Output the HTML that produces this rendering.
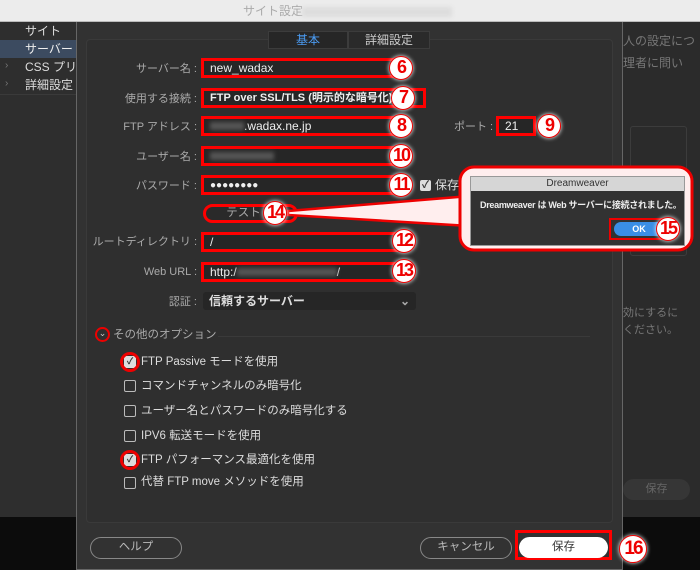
<!DOCTYPE html>
<html><head><meta charset="utf-8"><style>
*{margin:0;padding:0;box-sizing:border-box}
body{width:700px;height:570px;overflow:hidden;background:#2b2b2b;font-family:"Liberation Sans","Noto Sans CJK JP",sans-serif;position:relative;color:#ddd;font-size:11px}
.a{position:absolute}
.lbl{position:absolute;right:503px;color:#aaa;font-size:11px;white-space:nowrap;line-height:14px}
.inp{position:absolute;left:201px;width:197px;height:20px;background:#262626;border:3px solid #f00;color:#eee;font-size:12px;padding-left:6px;line-height:15px}
.num{position:absolute;width:24px;height:24px;border-radius:50%;background:#fff;border:1.5px solid #e00;color:#e00;font-weight:bold;font-size:18px;line-height:21px;text-align:center;box-shadow:0 0 4px #fff;letter-spacing:-2px;font-family:"Liberation Sans",sans-serif}
.cb{position:absolute;left:124px;width:12px;height:12px;border:1.5px solid #bbb;border-radius:2px}
.ct{position:absolute;left:141px;color:#ddd;font-size:11.5px;white-space:nowrap;line-height:14px}
.pill{position:absolute;border:1.5px solid #888;border-radius:12px;text-align:center;color:#bbb;font-size:11.5px}
</style></head><body>
<div class="a" style="left:0;top:0;width:700px;height:22px;background:#ececec;border-bottom:1px solid #bbb"></div>
<div class="a" style="left:243px;top:4px;color:#aaa;font-size:12px;line-height:14px">サイト設定</div>
<div class="a" style="left:302px;top:7px;width:150px;height:10px;background:#ddd;filter:blur(2px)"></div>
<div class="a" style="left:0;top:22px;width:76px;height:495px;background:#2e2e2e"></div>
<div class="a" style="left:0;top:517px;width:76px;height:53px;background:#0c0c0c"></div>
<div class="a" style="left:25px;top:24px;font-size:12px;color:#ddd;line-height:14px">サイト</div>
<div class="a" style="left:0;top:40px;width:76px;height:18px;background:#3c4b60"></div>
<div class="a" style="left:25px;top:42px;font-size:12px;color:#eee;line-height:14px">サーバー</div>
<div class="a" style="left:5px;top:60px;font-size:10px;color:#777">›</div>
<div class="a" style="left:25px;top:60px;font-size:12px;color:#ddd;white-space:nowrap;width:50px;overflow:hidden;line-height:14px">CSS プリプ</div>
<div class="a" style="left:5px;top:78px;font-size:10px;color:#777">›</div>
<div class="a" style="left:25px;top:78px;font-size:12px;color:#ddd;line-height:14px">詳細設定</div>
<div class="a" style="left:0;top:94px;width:76px;height:1px;background:#3a3a3a"></div>
<div class="a" style="left:623px;top:517px;width:77px;height:53px;background:#0c0c0c"></div>
<div class="a" style="left:623px;top:30px;color:#777;font-size:12px;line-height:22px;white-space:nowrap">人の設定につ<br>理者に問い</div>
<div class="a" style="left:630px;top:126px;width:57px;height:130px;border:1px solid #3c3c3c;border-radius:3px"></div>
<div class="a" style="left:623px;top:305px;color:#777;font-size:11px;line-height:17px;white-space:nowrap">効にするに<br>ください。</div>
<div class="a" style="left:623px;top:479px;width:67px;height:21px;background:#363636;border-radius:11px;color:#666;text-align:center;line-height:21px">保存</div>
<div class="a" style="left:76px;top:22px;width:547px;height:548px;background:#323232;border-left:1px solid #666;border-right:1px solid #666;border-bottom:1px solid #666"></div>
<div class="a" style="left:86px;top:39px;width:527px;height:484px;background:#2f2f2f;border:1px solid #3a3a3a;border-radius:4px"></div>
<div class="a" style="left:268px;top:31px;width:80px;height:18px;background:#262626;border:1px solid #3c3c3c;color:#4a9af0;text-align:center;line-height:16px;font-size:12px">基本</div>
<div class="a" style="left:348px;top:31px;width:82px;height:18px;background:#2a2a2a;border:1px solid #3c3c3c;color:#ccc;text-align:center;line-height:16px;font-size:12px">詳細設定</div>

<div class="lbl" style="top:62px">サーバー名 :</div>
<div class="inp" style="top:58px">new_wadax</div>
<div class="lbl" style="top:92px">使用する接続 :</div>
<div class="inp" style="top:88px;width:225px;font-weight:bold;font-size:11px">FTP over SSL/TLS (明示的な暗号化)</div>
<div class="lbl" style="top:120px">FTP アドレス :</div>
<div class="inp" style="top:116px"><span style="display:inline-block;width:34px;height:8px;background:#555;filter:blur(2px)"></span>.wadax.ne.jp</div>
<div class="a" style="left:454px;top:120px;color:#aaa;font-size:11px;line-height:14px">ポート :</div>
<div class="inp" style="left:496px;top:116px;width:40px">21</div>
<div class="lbl" style="top:150px">ユーザー名 :</div>
<div class="inp" style="top:146px"><span style="display:inline-block;width:64px;height:8px;background:#555;filter:blur(2px)"></span></div>
<div class="lbl" style="top:179px">パスワード :</div>
<div class="inp" style="top:175px;font-size:10px">●●●●●●●●</div>
<div class="a" style="left:420px;top:180px;width:11px;height:11px;background:#ddd;border-radius:2px;color:#333;font-size:10px;line-height:11px;text-align:center;font-weight:bold">✓</div>
<div class="a" style="left:435px;top:178px;color:#ddd;font-size:12px;line-height:14px">保存</div>
<div class="a" style="left:203px;top:204px;width:95px;height:19px;border:3px solid #f00;border-radius:10px;background:#2a2a2a;color:#aaa;text-align:center;line-height:13px;padding-right:14px;font-size:11.5px">テスト</div>
<div class="lbl" style="top:235px">ルートディレクトリ :</div>
<div class="inp" style="top:232px">/</div>
<div class="lbl" style="top:265px">Web URL :</div>
<div class="inp" style="top:262px">http:/<span style="display:inline-block;width:100px;height:8px;background:#555;filter:blur(2px)"></span>/</div>
<div class="lbl" style="top:295px">認証 :</div>
<div class="a" style="left:203px;top:292px;width:213px;height:18px;background:#262626;border-radius:3px;color:#ddd;padding-left:6px;line-height:18px;font-weight:bold;font-size:12px">信頼するサーバー<span style="position:absolute;right:6px;color:#aaa">⌄</span></div>

<div class="a" style="left:95px;top:327px;width:15px;height:15px;border:2.5px solid #e00;border-radius:50%;color:#ccc;font-size:9px;text-align:center;line-height:9px">⌄</div>
<div class="a" style="left:113px;top:328px;color:#aaa;font-size:11.5px;line-height:14px">その他のオプション</div>
<div class="a" style="left:218px;top:336px;width:372px;height:1px;background:#3a3a3a"></div>

<div class="cb" style="top:356px;background:#ddd;border-color:#ddd;color:#333;font-size:9px;text-align:center;line-height:9px;font-weight:bold">✓</div>
<div class="a" style="left:120px;top:352px;width:20px;height:20px;border:3px solid #e00;border-radius:50%"></div>
<div class="ct" style="top:355px">FTP Passive モードを使用</div>
<div class="cb" style="top:380px"></div><div class="ct" style="top:379px">コマンドチャンネルのみ暗号化</div>
<div class="cb" style="top:405px"></div><div class="ct" style="top:404px">ユーザー名とパスワードのみ暗号化する</div>
<div class="cb" style="top:430px"></div><div class="ct" style="top:429px">IPV6 転送モードを使用</div>
<div class="cb" style="top:454px;background:#ddd;border-color:#ddd;color:#333;font-size:9px;text-align:center;line-height:9px;font-weight:bold">✓</div>
<div class="a" style="left:120px;top:450px;width:20px;height:20px;border:3px solid #e00;border-radius:50%"></div>
<div class="ct" style="top:453px">FTP パフォーマンス最適化を使用</div>
<div class="cb" style="top:477px"></div><div class="ct" style="top:475px">代替 FTP move メソッドを使用</div>

<div class="pill" style="left:90px;top:537px;width:92px;height:22px;line-height:19px">ヘルプ</div>
<div class="pill" style="left:420px;top:537px;width:92px;height:22px;line-height:19px">キャンセル</div>
<div class="a" style="left:515px;top:530px;width:97px;height:30px;border:3px solid #f00"></div>
<div class="a" style="left:519px;top:537px;width:89px;height:21px;background:#fff;border-radius:11px;color:#333;text-align:center;line-height:21px;font-size:11.5px">保存</div>

<svg class="a" style="left:0;top:0" width="700" height="570">
<polygon points="288,211 470,196 470,226 288,215" fill="#ffeeee" stroke="#e00" stroke-width="2.5"/>
<rect x="460" y="167" width="232" height="83" rx="14" fill="#ffeeee" stroke="#e00" stroke-width="3"/>
<polygon points="462,198 462,224 472,224 472,198" fill="#ffeeee"/>
</svg>
<div class="a" style="left:470px;top:176px;width:215px;height:70px;background:#323232;border:1px solid #999"></div>
<div class="a" style="left:471px;top:177px;width:213px;height:14px;background:#d6d6d6;color:#333;text-align:center;font-size:10px;line-height:14px">Dreamweaver</div>
<div class="a" style="left:480px;top:200px;color:#eee;font-size:9px;white-space:nowrap;line-height:11px;font-weight:bold;letter-spacing:-0.3px">Dreamweaver は Web サーバーに接続されました。</div>
<div class="a" style="left:614px;top:222px;width:50px;height:14px;background:#3a8ee6;border-radius:7px;color:#fff;font-size:9px;line-height:14px;text-align:center;font-weight:bold">OK</div>
<div class="a" style="left:609px;top:218px;width:55px;height:22px;border:2px solid #e00"></div>

<div class="num" style="left:389px;top:56px">6</div>
<div class="num" style="left:391px;top:86px">7</div>
<div class="num" style="left:389px;top:114px">8</div>
<div class="num" style="left:537px;top:114px">9</div>
<div class="num" style="left:389px;top:144px">10</div>
<div class="num" style="left:389px;top:173px">11</div>
<div class="num" style="left:263px;top:201px">14</div>
<div class="num" style="left:392px;top:229px">12</div>
<div class="num" style="left:392px;top:259px">13</div>
<div class="num" style="left:656px;top:217px">15</div>
<div class="num" style="left:619px;top:535px;width:28px;height:28px;line-height:25px;font-size:19px">16</div>
</body></html>
